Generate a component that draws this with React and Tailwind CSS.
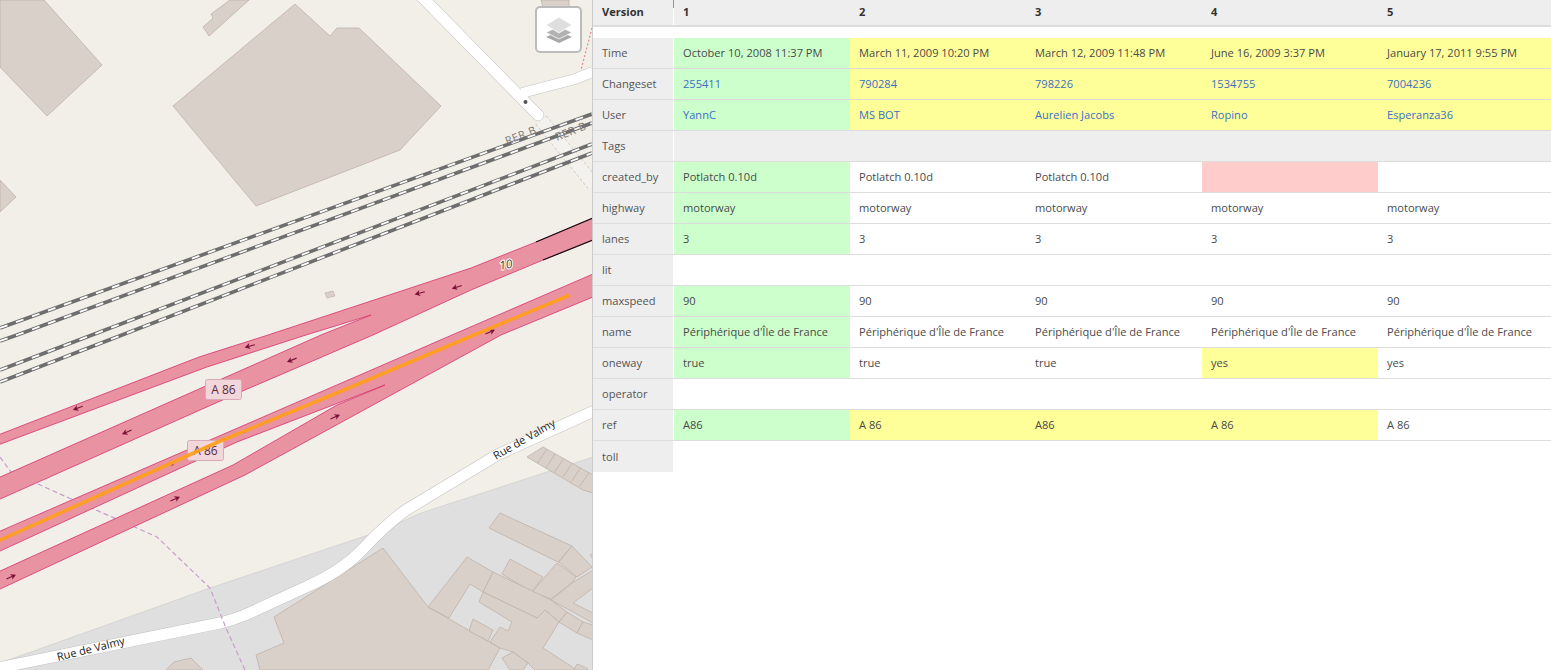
import React from 'react';

const versions = ['1', '2', '3', '4', '5'];

const rows = [
  { label: 'Time', cells: [['October 10, 2008 11:37 PM', 'g'], ['March 11, 2009 10:20 PM', 'y'], ['March 12, 2009 11:48 PM', 'y'], ['June 16, 2009 3:37 PM', 'y'], ['January 17, 2011 9:55 PM', 'y']] },
  { label: 'Changeset', link: true, cells: [['255411', 'g'], ['790284', 'y'], ['798226', 'y'], ['1534755', 'y'], ['7004236', 'y']] },
  { label: 'User', link: true, cells: [['YannC', 'g'], ['MS BOT', 'y'], ['Aurelien Jacobs', 'y'], ['Ropino', 'y'], ['Esperanza36', 'y']] },
  { label: 'Tags', section: true, cells: [] },
  { label: 'created_by', cells: [['Potlatch 0.10d', 'g'], ['Potlatch 0.10d', ''], ['Potlatch 0.10d', ''], ['', 'r'], ['', '']] },
  { label: 'highway', cells: [['motorway', 'g'], ['motorway', ''], ['motorway', ''], ['motorway', ''], ['motorway', '']] },
  { label: 'lanes', cells: [['3', 'g'], ['3', ''], ['3', ''], ['3', ''], ['3', '']] },
  { label: 'lit', cells: [] },
  { label: 'maxspeed', cells: [['90', 'g'], ['90', ''], ['90', ''], ['90', ''], ['90', '']] },
  { label: 'name', cells: [['Périphérique d\'Île de France', 'g'], ['Périphérique d\'Île de France', ''], ['Périphérique d\'Île de France', ''], ['Périphérique d\'Île de France', ''], ['Périphérique d\'Île de France', '']] },
  { label: 'oneway', cells: [['true', 'g'], ['true', ''], ['true', ''], ['yes', 'y'], ['yes', '']] },
  { label: 'operator', cells: [] },
  { label: 'ref', cells: [['A86', 'g'], ['A 86', 'y'], ['A86', 'y'], ['A 86', 'y'], ['A 86', '']] },
  { label: 'toll', last: true, cells: [] },
];

const cellBg = { g: 'bg-[#ccffcc]', y: 'bg-[#ffff99]', r: 'bg-[#ffcccc]', '': 'bg-white' };

// x, y, rotation, scale
const arrows = [
  [420, 293, 165, 1], [457, 287, 162, 1], [250, 346, 165, 1], [78, 408, 160, 1], [292, 360, 158, 1], [127, 432, 157, 1],
  [490, 332, -25, 1], [335, 417, -25, 1], [175, 499, -25, 1], [11, 577, -25, 1],
  [6, 537, -25, 0.35], [172, 465, -25, 0.35], [337, 393, -25, 0.35], [503, 323, -25, 0.35],
];

const buildings = [
  '0,0 44,0 102,65 47,116 0,67',
  '295,4 330,36 337,28 359,28 441,106 400,150 256,206 173,106',
  '0,180 16,197 0,212',
  '230,0 211,14 213,18 203,27 209,36 249,0',
  '541,0 543,7 569,7 569,0',
  '383,548 428,607 500,648 488,670 260,670 256,655 284,643 274,617',
  '527,457 543,447 593,475 593,493 583,490',
  '500,513 572,546 558,562 489,528',
  '572,546 592,567 577,577 559,562',
  '590,555 593,553 593,559',
  '510,559 543,577 532,592 502,574',
  '557,563 576,577 572,583 551,599 532,592',
  '572,583 593,570 593,588 573,603 593,613 593,623 551,600',
  '493,572 551,600 567,612 559,622 545,610 537,618 483,592',
  '467,557 493,572 483,592 470,584 449,618 428,607',
  '483,592 537,618 545,610 559,622 543,648 577,670 535,670 528,663 513,652 500,648 490,642 500,627 508,631 512,622 479,602',
  '502,658 513,652 528,663 523,670 510,670',
  '473,619 493,630 488,641 469,631',
  '567,612 583,622 577,633 559,622',
  '583,622 593,625 593,640 577,633',
  '574,670 577,664 587,668 588,670',
  '166,670 174,662 191,658 203,670',
];

const rails = [
  '0,328 592,114',
  '0,341 17,335 592,123',
  '0,370 92,335 592,144',
  '0,382 122,335 592,153',
];

const valmy = 'M-2 668 L220 623 Q233 620 245 615 L306 587 Q340 572 360 552 Q385 525 406 510 L497 455 L594 411';

function MapView() {
  return (
    <svg className="absolute inset-0" width="592" height="670" viewBox="0 0 592 670">
      <rect width="592" height="670" fill="#f2efe9" />
      <polygon points="593,457 421,513 383,530 210,588 0,663 0,671 593,671" fill="#dfdfdf" stroke="#c9c9c9" strokeWidth="0.6" />
      {buildings.map((b, i) => (
        <polygon key={i} points={b} fill="#d9d0c9" stroke="#bfb3a8" strokeWidth="0.8" />
      ))}
      {[0, 1, 2, 3, 4, 5].map((i) => (
        <line key={i} x1={546.7 + i * 8.5} y1={449.3 + i * 4.6} x2={537.3 + i * 8.5} y2={463.3 + i * 4.6} stroke="#bfb3a8" strokeWidth="0.8" />
      ))}
      <polygon points="325,293 333,291 335,296 327,298" fill="#d9d0c9" stroke="#bfb3a8" strokeWidth="0.7" />

      <polyline points="592,28 581,70" fill="none" stroke="#e58a8a" strokeWidth="1.2" strokeDasharray="2 2" />
      <polyline points="541,120 594,185" fill="none" stroke="#bdbdbd" strokeWidth="14" strokeDasharray="3 2" />
      <polyline points="541,120 594,185" fill="none" stroke="#f4f2ee" strokeWidth="13" />
      <polyline points="421,-4 538,115" fill="none" stroke="#c4c4c4" strokeWidth="12" strokeLinecap="round" />
      <polyline points="522,93 575,79 593,72" fill="none" stroke="#c4c4c4" strokeWidth="11" />
      <polyline points="522,93 575,79 593,72" fill="none" stroke="#ffffff" strokeWidth="10" />
      <polyline points="421,-4 538,115" fill="none" stroke="#ffffff" strokeWidth="11" strokeLinecap="round" />
      <circle cx="525.5" cy="102" r="2" fill="#555555" />

      {rails.map((r, i) => (
        <g key={i}>
          <polyline points={r} fill="none" stroke="#6e6e6e" strokeWidth="3.6" />
          <polyline points={r} fill="none" stroke="#ffffff" strokeWidth="1.8" strokeDasharray="8 9" />
        </g>
      ))}
      <text transform="translate(507,145) rotate(-22)" fontSize="11" letterSpacing="0.6" fill="#777777" fontFamily="Open Sans, sans-serif">RER B</text>
      <text transform="translate(557,141) rotate(-22)" fontSize="11" letterSpacing="0.6" fill="#777777" fontFamily="Open Sans, sans-serif">RER B</text>

      <path d={valmy} fill="none" stroke="#c0c0c0" strokeWidth="12" />
      <path d={valmy} fill="none" stroke="#ffffff" strokeWidth="11" />
      <polyline points="0,457 11,472 69,498 157,537 210,588 226,628 245,670" fill="none" stroke="#c99ccb" strokeWidth="1.2" strokeDasharray="5 3" />

      <polygon
        points="593,218 536,242 471,268 268,335 199,357 -2,435 -2,445 207,367 306,335 371,315 321,335 -2,478 -2,500 245,390 373,335 471,290 543,260 593,240"
        fill="#e892a2" stroke="#d6336c" strokeWidth="0.8"
      />
      <polygon
        points="593,274 452,335 -2,532 -2,552 237,442 385,385 337,405 233,465 -2,572 -2,590 245,475 501,335 593,297"
        fill="#e892a2" stroke="#d6336c" strokeWidth="0.8"
      />
      <polyline points="593,218 536,242" fill="none" stroke="#111111" strokeWidth="1.2" />
      <polyline points="593,240 543,260" fill="none" stroke="#111111" strokeWidth="1.2" />

      {arrows.map(([x, y, rot, s], i) => (
        <g key={i} transform={`translate(${x},${y}) rotate(${rot}) scale(${s})`}>
          <path d="M-5,0 L3,0" fill="none" stroke="#7a1238" strokeWidth="1.1" />
          <path d="M5.5,0 L0,-3 L1.5,0 L0,3 Z" fill="#7a1238" />
        </g>
      ))}
      <text transform="translate(500,270) rotate(-10)" fontSize="12" fontStyle="italic" fill="#444444" stroke="#ffffff" strokeWidth="2" paintOrder="stroke" fontFamily="Open Sans, sans-serif">10</text>

      <rect x="205.5" y="379.5" width="36" height="20" rx="2" fill="#f1d6dc" stroke="#d9aab6" />
      <text x="223.5" y="394" textAnchor="middle" fontSize="12" fill="#5a2a3c" fontFamily="Open Sans, sans-serif">A 86</text>
      <rect x="187.5" y="440.5" width="36" height="20" rx="2" fill="#f1d6dc" stroke="#d9aab6" />
      <text x="205.5" y="455" textAnchor="middle" fontSize="12" fill="#5a2a3c" fontFamily="Open Sans, sans-serif">A 86</text>

      <text transform="translate(496,460) rotate(-30)" fontSize="11" fill="#222222" fontFamily="Open Sans, sans-serif">Rue de Valmy</text>
      <text transform="translate(58,661) rotate(-14)" fontSize="11" fill="#222222" fontFamily="Open Sans, sans-serif">Rue de Valmy</text>

      <polyline points="570,295 474,335 337,393 218,442 -2,541" fill="none" stroke="#ffa01c" strokeWidth="3.6" opacity="0.92" />
    </svg>
  );
}

function LayersButton() {
  return (
    <div className="absolute left-[535px] top-[6px] w-[47px] h-[47px] bg-white rounded-[5px] border-2 border-[#bbbbbb] flex items-center justify-center">
      <svg width="26" height="26" viewBox="0 0 26 26">
        <path d="M13 14 L26 20 L13 26 L0 20 Z" fill="#a8a8a8" />
        <path d="M13 9 L26 15.5 L13 22 L0 15.5 Z" fill="#b2b2b2" stroke="#ffffff" strokeWidth="0.8" />
        <path d="M13 0 L26 8 L13 16 L0 8 Z" fill="#dedede" stroke="#ffffff" strokeWidth="0.8" />
      </svg>
    </div>
  );
}

function Row({ row }) {
  const border = row.last ? 'h-[31px]' : 'h-[31px] border-b border-[#dddddd]';
  return (
    <div className={`flex ${border}`}>
      <div className="w-[81px] shrink-0 pl-[9px] pt-px bg-[#eeeeee] border-r border-white flex items-center text-[#555555]">{row.label}</div>
      {row.section && <div className="flex-1 bg-[#eeeeee]" />}
      {row.cells.map(([text, kind], i) => (
        <div key={i} className={`w-[176px] shrink-0 pl-[9px] pt-px flex items-center ${cellBg[kind]} ${row.link ? 'text-[#3b6fc4]' : 'text-[#4a4a4a]'}`}>
          {text}
        </div>
      ))}
    </div>
  );
}

export default function App() {
  return (
    <div className="w-[1551px] h-[670px] flex overflow-hidden bg-white text-[11.1px] font-['Open_Sans',sans-serif]">
      <div className="relative w-[593px] h-full shrink-0 border-r border-[#cccccc]">
        <MapView />
        <LayersButton />
      </div>
      <div className="relative flex-1 overflow-hidden">
        <div className="absolute left-[80px] top-0 w-px h-2 bg-[#33bbcc]" />
        <div className="flex h-[27px] bg-[#eeeeee] border-b-2 border-[#dddddd] font-bold text-[#333333]">
          <div className="w-[81px] shrink-0 pl-[9px] border-r border-white flex items-center">Version</div>
          {versions.map((v) => (
            <div key={v} className="w-[176px] shrink-0 pl-[9px] flex items-center">{v}</div>
          ))}
        </div>
        <div className="h-[11px]" />
        {rows.map((row) => (
          <Row key={row.label} row={row} />
        ))}
      </div>
    </div>
  );
}
